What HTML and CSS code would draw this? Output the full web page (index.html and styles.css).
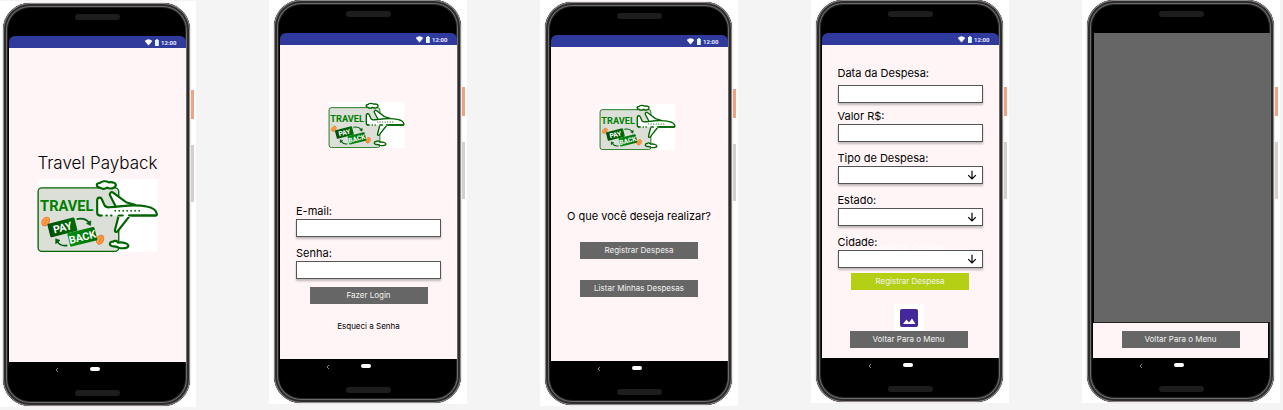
FILE: index.html
```html
<!DOCTYPE html>
<html lang="pt-BR">
<head>
<meta charset="utf-8">
<title>Travel Payback</title>
<link rel="stylesheet" href="styles.css">
</head>
<body>
<svg class="defs" aria-hidden="true">
  <defs>
    <linearGradient id="pay" x1="0" x2="1"><stop offset="0" stop-color="#004f00"/><stop offset="1" stop-color="#006c08"/></linearGradient>
    <linearGradient id="back" x1="0" x2="1"><stop offset="0" stop-color="#009210"/><stop offset="1" stop-color="#006c08"/></linearGradient>
    <symbol id="logo" viewBox="24 11 362 220">
      <rect x="24" y="11" width="362" height="220" fill="#fff"/>
      <rect x="26" y="38" width="243" height="191" rx="11" fill="#dcdfd8" stroke="#006400" stroke-width="4"/>
      <g fill="#fff" stroke="#006400" stroke-width="6.500" stroke-linejoin="round" stroke-linecap="round">
        <path d="M212 37c-12-2-12-14 0-14 5-6 19-7 27-2 14-2 23 3 21 10-3 9-18 11-26 6-6 4-14 5-22 0z"/>
        <path d="M252 200c5-5 13-3 15 3 14-3 30 2 31 9 0 8-18 9-29 6-7-5-14-3-21-5-9-3-7-14 4-13z"/>
        <path d="M252 52c-5-4-13 2-9 9l18 35 57-7-27-8z"/>
        <path d="M269 121l-11 42c-2 9 5 9 9 4l35-45z"/>
        <path d="M212 121c-7 0-8-4-8-10V76c0-10 11-12 14-4l9 20c4 4 9 5 15 4l14-1c30-4 71-7 97-1 20 4 30 13 31 23 0 3-2 4-5 4H300"/>
        <path d="M269 122h35" stroke="#fff"/>
        <path d="M212 121h6M232 121h1M246 121h1M269 121h12M300 121h80" fill="none"/>
        <path d="M258 107h1M270 107h1M282 107h1M294 107h1M306 107h1M318 107h1M330 107h1" fill="none" stroke-width="5"/>
      </g>
      <text x="32" y="107" class="logo-travel">TRAVEL</text>
      <g fill="#ff9f45" stroke="#e8782c" stroke-width="3">
        <ellipse cx="49" cy="139" rx="10" ry="14" transform="rotate(35 49 139)"/>
        <ellipse cx="213" cy="194" rx="10" ry="14" transform="rotate(25 213 194)"/>
        <path d="M44 145c8 2 2-12 10-11M209 200c8 2 1-12 9-11" fill="none"/>
      </g>
      <g fill="none" stroke="#006010" stroke-width="5">
        <path d="M142 132c18-4 30 1 38 11M114 211c-14 3-24-2-31-12"/>
        <path d="M172 145l12 6 1-14zM92 196l-13-5 0 15z" fill="#006010" stroke-width="2"/>
      </g>
      <g transform="rotate(-14 98 156)">
        <rect x="57" y="136" width="84" height="42" rx="4" fill="url(#pay)"/>
        <text x="99" y="169" class="logo-word">PAY</text>
      </g>
      <g transform="rotate(-14 160 184)">
        <rect x="117" y="164" width="84" height="42" rx="4" fill="url(#back)"/>
        <text x="159" y="197" class="logo-word">BACK</text>
      </g>
    </symbol>
    <symbol id="status" viewBox="0 0 33 10">
      <path d="M0 3Q3.500 .2 7 3L3.500 7.200z" fill="#fff" stroke="#fff" stroke-width=".5"/>
      <path d="M10 2h1V1.200h2V2h.8v6H10z" fill="#e4fbff"/>
      <text x="16" y="7.200" class="clock">12:00</text>
    </symbol>
    <symbol id="arrow" viewBox="0 0 10 10">
      <path d="M5 .8v8M1.200 5.200L5 9l3.800-3.800" fill="none" stroke="#000" stroke-width="1.200"/>
    </symbol>
    <symbol id="back-key" viewBox="0 0 4 6"><path d="M3 1L1 3l2 2" fill="none" stroke="#aaa" stroke-width=".8"/></symbol>
  </defs>
</svg>

<main class="board">
  <section class="card card-first">
    <div class="phone">
      <div class="bezel"><span class="speaker"></span></div>
      <header class="status"><svg><use href="#status"/></svg></header>
      <div class="screen splash">
        <h1 class="title">Travel Payback</h1>
        <svg class="logo-large" role="img" aria-label="Travel Payback"><use href="#logo"/></svg>
      </div>
      <footer class="nav"><svg><use href="#back-key"/></svg><span class="home"></span><span class="speaker"></span></footer>
      <i class="power"></i><i class="volume"></i>
    </div>
  </section>

  <section class="card">
    <div class="phone">
      <div class="bezel"><span class="speaker"></span></div>
      <header class="status"><svg><use href="#status"/></svg></header>
      <form class="screen login">
        <svg class="logo-small" role="img" aria-label="Travel Payback"><use href="#logo"/></svg>
        <div class="field"><label for="email">E-mail:</label><input id="email" type="email"></div>
        <div class="field"><label for="senha">Senha:</label><input id="senha" type="password"></div>
        <button class="btn" type="button">Fazer Login</button>
        <a class="forgot" href="#">Esqueci a Senha</a>
      </form>
      <footer class="nav"><svg><use href="#back-key"/></svg><span class="home"></span><span class="speaker"></span></footer>
      <i class="power"></i><i class="volume"></i>
    </div>
  </section>

  <section class="card card-menu">
    <div class="phone">
      <div class="bezel"><span class="speaker"></span></div>
      <header class="status"><svg><use href="#status"/></svg></header>
      <div class="screen menu">
        <svg class="logo-small" role="img" aria-label="Travel Payback"><use href="#logo"/></svg>
        <p class="question">O que você deseja realizar?</p>
        <button class="btn" type="button">Registrar Despesa</button>
        <button class="btn" type="button">Listar Minhas Despesas</button>
      </div>
      <footer class="nav"><svg><use href="#back-key"/></svg><span class="home"></span><span class="speaker"></span></footer>
      <i class="power"></i><i class="volume"></i>
    </div>
  </section>

  <section class="card">
    <div class="phone">
      <div class="bezel"><span class="speaker"></span></div>
      <header class="status"><svg><use href="#status"/></svg></header>
      <form class="screen expense">
        <div class="field field-date"><label for="data">Data da Despesa:</label><input id="data" type="text"></div>
        <div class="field"><label for="valor">Valor R$:</label><input id="valor" type="text"></div>
        <div class="field"><label for="tipo">Tipo de Despesa:</label><div class="pick"><select id="tipo"><option></option></select><svg><use href="#arrow"/></svg></div></div>
        <div class="field"><label for="estado">Estado:</label><div class="pick"><select id="estado"><option></option></select><svg><use href="#arrow"/></svg></div></div>
        <div class="field"><label for="cidade">Cidade:</label><span class="ghost">Registrar Despesa</span><div class="pick"><select id="cidade"><option></option></select><svg><use href="#arrow"/></svg></div></div>
        <button class="btn btn-lime" type="button">Registrar Despesa</button>
        <div class="expense-footer">
          <button class="photo" type="button" aria-label="Imagem">
            <svg viewBox="0 0 18 18"><rect width="18" height="18" rx="2" fill="#44279b"/><path d="M3 15l3.500-4.500L9 13.500l3-4L15.500 15z" fill="#fff"/></svg>
          </button>
          <button class="btn" type="button">Voltar Para o Menu</button>
        </div>
      </form>
      <footer class="nav"><svg><use href="#back-key"/></svg><span class="home"></span><span class="speaker"></span></footer>
      <i class="power"></i><i class="volume"></i>
    </div>
  </section>

  <section class="card">
    <div class="phone">
      <div class="bezel"><span class="speaker"></span></div>
      <div class="list"></div>
      <div class="list-actions"><button class="btn" type="button">Voltar Para o Menu</button></div>
      <footer class="nav"><svg><use href="#back-key"/></svg><span class="home"></span><span class="speaker"></span></footer>
      <i class="power"></i><i class="volume"></i>
    </div>
  </section>
</main>
</body>
</html>
```

FILE: styles.css
```css
* { box-sizing: border-box; }

body {
  margin: 0;
  background: #f4f4f4;
  color: #000;
  font-family: Inter, "Liberation Sans", sans-serif;
}

.defs { position: absolute; width: 0; height: 0; }

.board {
  display: flex;
  justify-content: space-between;
  align-items: flex-start;
  padding-right: 3px;
}

.card {
  flex: none;
  display: flex;
  justify-content: flex-end;
  width: 198px;
  padding: 0 6px 1px 0;
  background: #fff;
}
.card-first { width: 196px; margin-top: 1px; padding-top: 2px; }
.card-menu { padding-top: 2px; }

/* Device frame */
.phone {
  position: relative;
  display: flex;
  flex-direction: column;
  width: 187px;
  padding: 0 4px 0 6px;
  border-radius: 27px;
  background: #000;
  box-shadow:
    inset 0 0 0 1px #8d8785,
    inset 0 0 0 3px #2c2c2c,
    inset 0 0 0 4px #6c6c6c,
    inset 0 0 0 5px #222,
    0 0 2px #b5aaa6;
}

.bezel {
  display: flex;
  justify-content: center;
  height: 33px;
  padding-top: 11px;
}
.speaker { width: 45px; height: 6px; border-radius: 3px; background: #1d1d1d; }

.status {
  display: flex;
  justify-content: flex-end;
  height: 12px;
  padding: 2px 8px 0 0;
  border-radius: 6px 6px 0 0;
  background: #2f3a9c;
}
.status svg { width: 33px; height: 10px; }
.clock { font: 700 6px Roboto, sans-serif; fill: #e6e8ff; }

.nav {
  display: grid;
  grid-template-columns: 81px 10px 1fr;
  grid-template-rows: 23px auto;
  justify-items: center;
  align-items: start;
  height: 44px;
  padding-top: 5px;
}
.nav svg { width: 4px; height: 6px; margin-right: -14px; }
.home { width: 10px; height: 4px; border-radius: 2px; background: #fff; }
.nav .speaker { grid-column: 1 / -1; }

.power, .volume { position: absolute; left: 188px; width: 3px; }
.power { top: 87px; height: 29px; background: #f0a283; }
.volume { top: 142px; height: 57px; background: #d6cfcb; }

/* Screens */
.screen {
  display: flex;
  flex-direction: column;
  align-items: center;
  min-height: 314px;
  background: #fff5f6;
}

.splash { padding-top: 104px; }
.title { margin: 0 0 5px; font-size: 17px; line-height: 22px; font-weight: 300; white-space: nowrap; }
.logo-large { width: 121px; height: 73px; }
.logo-small { width: 77px; height: 46px; margin-right: 5px; }
.logo-travel { font: 700 44px Roboto, sans-serif; fill: #008000; }
.logo-word { font: 700 32px Roboto, sans-serif; fill: #fff; text-anchor: middle; }

.field { position: relative; display: flex; flex-direction: column; width: 145px; }
.field label { font-size: 11px; line-height: 16px; }
.field input,
.field select {
  display: block;
  width: 100%;
  height: 18px;
  margin: 0;
  padding: 0 4px;
  border: 1px solid #555;
  border-radius: 0;
  background: #fff;
  box-shadow: 0 2px 2px rgba(0, 0, 0, .25);
  appearance: none;
  font: 10px Inter, sans-serif;
}
.pick { position: relative; }
.pick svg { position: absolute; right: 6px; top: 4px; width: 10px; height: 10px; pointer-events: none; }
.ghost { position: absolute; left: 39px; top: 8px; font-size: 8px; line-height: 10px; color: #fff; }

.btn {
  width: 118px;
  height: 17px;
  padding: 0;
  border: 0;
  background: #666;
  color: #f2f2f2;
  font: 8px/17px Inter, "Liberation Sans", sans-serif;
}
.btn-lime { background: #b5d014; }

.login { padding-top: 57px; }
.login .logo-small { margin-bottom: 55px; }
.login .field { margin-bottom: 8px; }
.forgot { margin-top: 16px; color: #000; font-size: 8px; line-height: 12px; text-decoration: none; }

.menu { padding: 57px 1px 0 0; }
.menu .logo-small { margin-right: 4px; }
.question { margin: 58px 0 18px; font-size: 11px; line-height: 16px; white-space: nowrap; }
.menu .btn { margin-bottom: 21px; }

.expense { min-height: 313px; padding: 20px 1px 0 0; gap: 8px; }
.field-date { gap: 4px; margin-bottom: -3px; }
.expense .btn-lime { margin-top: -3px; }
.expense-footer {
  display: flex;
  flex-direction: column;
  align-items: center;
  margin: 6px 3px 0 0;
}
.photo {
  width: 30px;
  height: 27px;
  padding: 4px 6px;
  border: 0;
  background: #fff;
}
.photo svg { display: block; width: 18px; height: 18px; }

.list { height: 290px; margin-left: 1px; background: #666; border-bottom: 1px solid #222; }
.list-actions {
  display: flex;
  justify-content: center;
  padding: 8px 0 10px;
  margin-right: 2px;
  background: #fff5f6;
}
```
